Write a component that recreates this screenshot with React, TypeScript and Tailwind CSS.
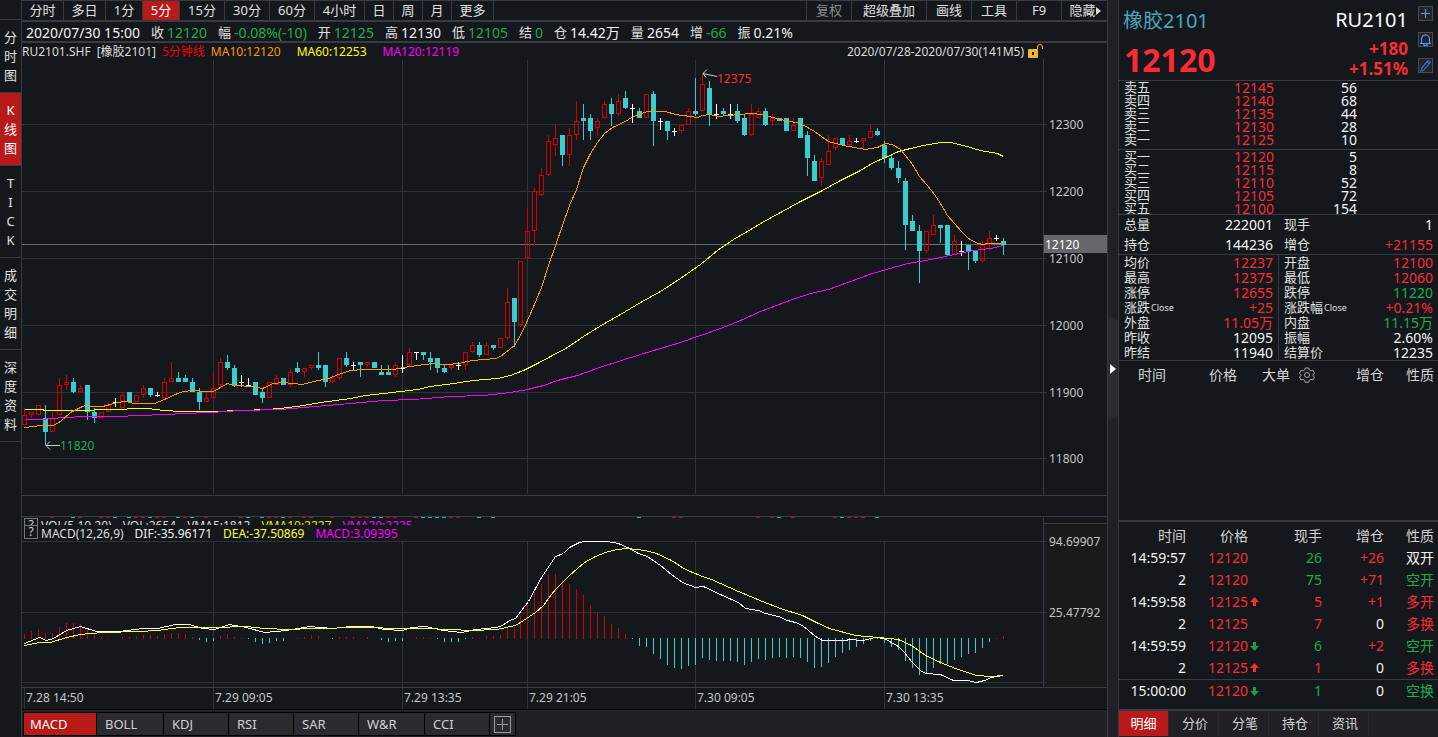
import clsx from 'clsx'
import type { ReactNode } from 'react'

type Kind = 'U' | 'D' | 'W'
// kind, body top, body bottom, high, low - in 5-point steps above 11800
type Candle = [Kind, number, number, number, number]
type Quote = { label: string; value: string; tone?: string; sup?: string }
type Trade = {
  time: string
  price: string
  dir?: 'up' | 'down'
  hand: string
  diff: string
  kind: string
  handTone: string
  kindTone: string
}

const RED = 'text-[#fb2b33]'
const GREEN = 'text-[#1fae4c]'
const WHITE = 'text-[#f2f2f2]'

const periods = [
  { name: '分时', width: 'w-[42px]' },
  { name: '多日', width: 'w-[42px]' },
  { name: '1分', width: 'w-[37px]' },
  { name: '5分', width: 'w-[37px]' },
  { name: '15分', width: 'w-[45px]' },
  { name: '30分', width: 'w-[45px]' },
  { name: '60分', width: 'w-[45px]' },
  { name: '4小时', width: 'w-[50px]' },
  { name: '日', width: 'w-[29px]' },
  { name: '周', width: 'w-[29px]' },
  { name: '月', width: 'w-[29px]' },
  { name: '更多', width: 'w-[42px]' },
]

const tools = [
  { name: '复权', width: 'w-[45px]' },
  { name: '超级叠加', width: 'w-[75px]' },
  { name: '画线', width: 'w-[45px]' },
  { name: '工具', width: 'w-[45px]' },
  { name: 'F9', width: 'w-[45px]' },
]

const views = ['分时图', 'K线图', 'TICK', '成交明细', '深度资料']

const summary: Quote[] = [
  { label: '收', value: '12120', tone: GREEN },
  { label: '幅', value: '-0.08%(-10)', tone: GREEN },
  { label: '开', value: '12125', tone: GREEN },
  { label: '高', value: '12130' },
  { label: '低', value: '12105', tone: GREEN },
  { label: '结', value: '0', tone: GREEN },
  { label: '仓', value: '14.42万' },
  { label: '量', value: '2654' },
  { label: '增', value: '-66', tone: GREEN },
  { label: '振', value: '0.21%' },
]

const indicators = [
  { name: 'MACD', width: 'w-[72px]' },
  { name: 'BOLL', width: 'w-[66px]' },
  { name: 'KDJ', width: 'w-16' },
  { name: 'RSI', width: 'w-16' },
  { name: 'SAR', width: 'w-16' },
  { name: 'W&R', width: 'w-[65px]' },
  { name: 'CCI', width: 'w-16' },
]

const asks = [
  ['卖五', '12145', '56'],
  ['卖四', '12140', '68'],
  ['卖三', '12135', '44'],
  ['卖二', '12130', '28'],
  ['卖一', '12125', '10'],
]

const bids = [
  ['买一', '12120', '5'],
  ['买二', '12115', '8'],
  ['买三', '12110', '52'],
  ['买四', '12105', '72'],
  ['买五', '12100', '154'],
]

const totals: Quote[] = [
  { label: '总量', value: '222001' },
  { label: '现手', value: '1' },
  { label: '持仓', value: '144236' },
  { label: '增仓', value: '+21155', tone: RED },
]

const stats: Quote[] = [
  { label: '均价', value: '12237', tone: RED },
  { label: '开盘', value: '12100', tone: RED },
  { label: '最高', value: '12375', tone: RED },
  { label: '最低', value: '12060', tone: RED },
  { label: '涨停', value: '12655', tone: RED },
  { label: '跌停', value: '11220', tone: GREEN },
  { label: '涨跌', value: '+25', tone: RED, sup: 'Close' },
  { label: '涨跌幅', value: '+0.21%', tone: RED, sup: 'Close' },
  { label: '外盘', value: '11.05万', tone: RED },
  { label: '内盘', value: '11.15万', tone: GREEN },
  { label: '昨收', value: '12095' },
  { label: '振幅', value: '2.60%' },
  { label: '昨结', value: '11940' },
  { label: '结算价', value: '12235' },
]

const trades: Trade[] = [
  { time: '14:59:57', price: '12120', hand: '26', diff: '+26', kind: '双开', handTone: GREEN, kindTone: WHITE },
  { time: '2', price: '12120', hand: '75', diff: '+71', kind: '空开', handTone: GREEN, kindTone: GREEN },
  { time: '14:59:58', price: '12125', dir: 'up', hand: '5', diff: '+1', kind: '多开', handTone: RED, kindTone: RED },
  { time: '2', price: '12125', hand: '7', diff: '0', kind: '多换', handTone: RED, kindTone: RED },
  { time: '14:59:59', price: '12120', dir: 'down', hand: '6', diff: '+2', kind: '空开', handTone: GREEN, kindTone: GREEN },
  { time: '2', price: '12125', dir: 'up', hand: '1', diff: '0', kind: '多换', handTone: RED, kindTone: RED },
  { time: '15:00:00', price: '12120', dir: 'down', hand: '1', diff: '0', kind: '空换', handTone: GREEN, kindTone: GREEN },
]

const detailTabs = ['明细', '分价', '分笔', '持仓', '资讯']

const candles: Candle[] = [
  ['U', 13, 10, 15, 10], ['U', 14, 13, 14, 12], ['U', 16, 13, 16, 13], ['D', 12, 8, 16, 4],
  ['U', 12, 8, 14, 8], ['U', 22, 13, 24, 13], ['U', 23, 22, 25, 20.5], ['D', 23, 20, 24, 19.5],
  ['U', 21, 20, 22, 20], ['D', 22, 14, 22, 11.5], ['D', 14, 12, 15, 10.5], ['U', 14, 12, 14, 12],
  ['U', 16, 14, 17, 14], ['W', 17, 17, 18, 15.5], ['U', 19, 15, 20, 15], ['D', 20, 17, 20, 16.5],
  ['U', 19, 17, 19, 17], ['U', 21, 19, 22, 18], ['D', 21, 19, 21, 18.5], ['W', 19, 19, 20, 18.5],
  ['U', 23, 18, 24, 18], ['U', 24, 23, 29, 23], ['D', 24, 23, 26, 23], ['D', 24, 23, 25, 23],
  ['D', 23, 20, 24, 20], ['D', 20, 17, 21, 14.5], ['U', 18, 17, 20, 17], ['U', 21, 18, 26, 18],
  ['U', 29, 22, 30, 21], ['D', 29, 27, 31, 26.5], ['D', 27, 22, 28, 21.5], ['W', 23, 23, 25, 21.5],
  ['W', 22, 22, 24, 21.5], ['D', 23, 19, 23, 19], ['D', 20, 18, 21, 16.5], ['U', 23, 18, 23, 18],
  ['U', 24, 22, 25, 22], ['D', 24, 22, 24, 22], ['U', 26, 22, 27, 21.5], ['D', 27, 26, 29, 25.5],
  ['U', 27, 26, 27, 24.5], ['U', 28, 27, 28, 26.5], ['D', 28, 27, 32, 26.5], ['D', 28, 23, 28, 21.5],
  ['U', 24, 23, 25, 22.5], ['U', 30, 24, 30, 23.5], ['D', 30, 28, 32, 27.5], ['W', 28, 28, 29, 26.5],
  ['D', 29, 28, 29, 24.5], ['U', 29, 28, 29, 27.5], ['D', 29, 27, 29, 27], ['D', 26, 25, 28, 25],
  ['D', 26, 25, 28, 25], ['U', 28, 25, 29, 24.5], ['W', 27, 27, 31, 25.5], ['U', 32, 28, 33, 27.5],
  ['W', 32, 32, 32, 29.5], ['D', 32, 31, 32, 29.5], ['D', 30, 29, 32, 26.5], ['D', 30, 27, 30, 25.5],
  ['D', 27, 26, 28, 25.5], ['U', 28, 27, 28, 26.5], ['W', 28, 28, 29, 26.5], ['U', 32, 28, 32, 26.5],
  ['U', 34, 32, 35, 31.5], ['D', 34, 31, 35, 30.5], ['U', 34, 31, 35, 31], ['D', 34, 33, 34, 32.5],
  ['U', 36, 33, 36, 33], ['U', 47, 36, 51, 35.5], ['D', 48, 41, 48, 33.5], ['U', 59, 40, 59, 39.5],
  ['U', 68, 60, 75, 60], ['U', 80, 68, 81, 63.5], ['U', 85, 79, 87, 78.5], ['U', 95, 85, 97, 84.5],
  ['U', 96, 94, 100, 90.5], ['D', 97, 91, 97, 87.5], ['U', 97, 91, 99, 87.5], ['U', 101, 97, 107, 95.5],
  ['D', 102, 101, 106, 95.5], ['D', 102, 98, 103, 95.5], ['U', 101, 99, 102, 96.5], ['U', 106, 102, 107, 101.5],
  ['D', 106, 103, 108, 99.5], ['U', 107, 103, 109, 102.5], ['D', 108, 105, 110, 104.5], ['W', 105, 105, 106, 100.5],
  ['D', 104, 102, 105, 102], ['U', 109, 102, 109, 102], ['D', 109, 101, 110, 93.5], ['W', 101, 101, 102, 98.5],
  ['D', 101, 98, 101, 95.5], ['W', 98, 98, 99, 96.5], ['U', 100, 98, 100, 97.5], ['U', 104, 100, 105, 100],
  ['D', 104, 103, 114, 102.5], ['U', 112, 104, 115, 104], ['D', 111, 103, 113, 99.5], ['W', 103, 103, 106, 101.5],
  ['D', 104, 103, 105, 102.5], ['W', 103, 103, 106, 101.5], ['D', 104, 101, 106, 100.5], ['D', 102, 97, 103, 96.5],
  ['U', 103, 97, 106, 96.5], ['U', 104, 102, 105, 102], ['D', 104, 100, 105, 99.5], ['U', 102, 101, 103, 99.5],
  ['D', 102, 101, 102, 101], ['D', 102, 98, 102, 98], ['U', 100, 98, 102, 98], ['D', 102, 96, 102, 96],
  ['D', 97, 90, 98, 84.5], ['D', 89, 83, 91, 83], ['U', 89, 84, 90, 81.5], ['U', 92, 88, 97, 88],
  ['U', 96, 93, 96, 92.5], ['D', 96, 94, 96, 93.5], ['U', 95, 94, 97, 93.5], ['W', 95, 95, 96, 94.5],
  ['U', 96, 95, 96, 92.5], ['U', 98, 96, 100, 96], ['D', 98, 97, 99, 96.5], ['D', 94, 90, 95, 88.5],
  ['D', 90, 87, 91, 86.5], ['D', 87, 84, 89, 82.5], ['D', 83, 70, 84, 62.5], ['D', 71, 68, 73, 68],
  ['D', 68, 62, 70, 52.5], ['U', 68, 62, 68, 61.5], ['U', 70, 67, 73, 67], ['D', 70, 69, 70, 64.5],
  ['D', 70, 61, 70, 61], ['U', 65, 61, 67, 61], ['W', 62, 62, 65, 60.5], ['D', 64, 62, 64, 56.5],
  ['D', 62, 59, 62, 58.5], ['U', 64, 59, 65, 58.5], ['U', 66, 64, 68, 62.5], ['W', 66, 66, 67, 65],
  ['D', 65, 64, 66, 61],
]

const macdBars = [
  5, 8, 10, 6, 6, 12, 16, 16, 15, 11, 4, 2, 1, 0, 2, 2, 3, 4, 4, 3, 5, 6, 6, 5, 2, -2, -4, -3, 3, 5,
  2, 1, -1, -4, -6, -5, -3, -3, 0, 1, 2, 4, 3, 0, -1, 2, 2, 2, 1, 2, 0, -2, -4, -3, -3, 0, 2, 2, 1, -1,
  -4, -4, -4, -1, 2, 1, 3, 3, 4, 12, 12, 23, 34, 47, 55, 64, 65, 59, 55, 50, 44, 34, 27, 23, 15, 11, 5,
  -1, -8, -9, -16, -21, -27, -30, -31, -28, -27, -20, -22, -23, -23, -23, -24, -27, -24, -21, -22, -20,
  -19, -20, -19, -20, -24, -30, -29, -25, -19, -15, -12, -9, -6, -3, -1, -5, -9, -12, -23, -30, -37,
  -35, -30, -26, -26, -22, -19, -16, -15, -10, -4, 1, 3,
]

const volUp = [4, 8, 11, 12, 16, 17, 19, 20, 23, 26, 31, 35, 36, 38, 40, 41, 44, 47, 48, 49, 52, 53, 56, 61, 62, 93, 94, 105, 107, 110, 116, 118, 119, 120]
const volDown = [7, 13, 15, 18, 22, 24, 32, 34, 37, 50, 51, 57, 58, 59, 60, 65, 67, 88, 108, 117, 122]

const ma10 =
  '24,427 33,426 40,425 53,425 60,421 70,412 82,406 87,404 90,406 102,406 110,404 117,402 125,401 134,403 154,403 164,399 177,393 183,391 193,390 203,391 213,391 220,387 227,383 233,385 253,386 262,388 273,383 283,382 302,384 313,381 328,378 338,374 350,370 363,369 377,369 393,369 403,367 417,365 432,363 447,364 458,363 472,360 495,358 500,356 514,345 521,333 527,320 534,304 541,287 548,265 555,245 569,205 576,189 583,167 590,153 597,142 604,133 612,127 623,122 633,116 647,111 665,111 675,114 697,117 702,115 710,114 717,116 750,113 763,114 772,117 785,120 800,123 814,131 828,141 843,145 865,149 877,147 885,143 892,144 900,149 905,155 912,164 919,176 927,185 934,194 940,203 947,215 954,223 961,231 968,238 975,242 982,244 988,243 997,243 1003,244'
const ma60 =
  '24,409 42,409 44,410 63,410 125,409 128,408 147,408 163,410 182,411 210,411 243,410 265,409 280,408 303,405 320,402 350,398 365,395 383,393 400,391 417,389 430,386 453,383 473,380 497,378 510,375 523,370 537,363 550,356 567,347 583,336 599,326 620,314 640,302 660,291 680,278 700,264 717,250 733,239 747,231 760,223 780,212 800,201 820,191 840,180 860,170 873,162 885,157 898,151 910,148 923,145 940,142 950,142 963,145 980,150 997,153 1003,156'
const ma120 =
  '24,419 40,419 63,417 87,416 118,416 137,415 167,414 182,413 210,412 240,410 280,409 303,407 350,403 383,400 413,399 450,396 483,395 510,392 527,389 543,385 557,380 577,375 599,367 640,354 680,342 720,328 740,320 760,311 792,299 810,293 828,289 850,281 872,273 893,267 907,263 920,261 940,257 963,252 973,250 990,248 1003,245'
const dif =
  '24,643 39,637 46,640 53,638 66,630 80,626 96,631 118,631 143,628 157,628 175,624 189,624 202,628 214,629 229,624 246,627 264,632 286,630 309,626 332,628 350,626 371,626 384,629 402,630 411,627 425,626 443,630 461,632 475,629 496,627 502,625 509,620 515,618 521,610 528,601 535,588 541,577 549,565 555,556 563,553 569,547 579,542 584,541 607,541 618,543 629,548 638,553 647,556 660,565 671,574 682,582 695,587 703,586 722,595 738,602 745,608 758,610 765,613 778,616 787,620 795,622 802,625 808,630 815,636 822,640 845,640 849,639 862,640 875,637 884,638 889,641 898,646 904,652 911,661 920,670 925,673 940,674 953,680 967,680 976,682 984,680 991,677 1003,675'
const dea =
  '24,645 39,642 50,642 66,637 80,634 89,633 104,632 139,631 157,630 179,627 214,627 246,626 264,628 289,629 311,628 364,627 400,628 425,628 450,629 471,630 496,629 515,625 523,620 535,612 543,605 548,598 555,589 569,575 584,562 595,556 605,552 616,549 627,548 645,550 656,553 671,560 685,569 702,576 711,579 738,591 762,601 780,608 802,615 816,622 829,628 855,635 878,637 898,639 911,645 925,655 940,662 955,668 976,675 991,676 1003,675'

const priceLines = [
  { y: 124, label: '12300' },
  { y: 191, label: '12200' },
  { y: 258, label: '12100' },
  { y: 325, label: '12000' },
  { y: 392, label: '11900' },
  { y: 458, label: '11800' },
]

const sessions = [
  { x: 24, label: '7.28 14:50' },
  { x: 213, label: '7.29 09:05' },
  { x: 402, label: '7.29 13:35' },
  { x: 527, label: '7.29 21:05' },
  { x: 695, label: '7.30 09:05' },
  { x: 884, label: '7.30 13:35' },
]

const barX = (i: number) => (i > 70 ? 23 : 24) + i * 7
const levelY = (level: number) => Math.round(458.5 - level * 3.34)

const CandleShape = ({ candle, x }: { candle: Candle; x: number }) => {
  const [kind, top, bottom, high, low] = candle
  const t = levelY(top)
  const b = levelY(bottom)
  const h = levelY(high)
  const l = levelY(low)

  if (kind === 'W') {
    return (
      <g fill="#fff">
        <rect x={x} y={h} width={1} height={l - h} />
        <rect x={x - 2} y={t} width={5} height={1} />
      </g>
    )
  }

  if (kind === 'D') {
    return (
      <g fill="#38cdce">
        <rect x={x} y={h} width={1} height={l - h} />
        <rect x={x - 2} y={t} width={5} height={b - t} />
      </g>
    )
  }

  return (
    <g fill="#d40000">
      <rect x={x} y={h} width={1} height={t - h} />
      <rect x={x} y={b} width={1} height={Math.max(l - b, 0)} />
      <path d={`M${x - 2} ${t}h5v${b - t}h-5zM${x - 1} ${t + 1}v${b - t - 2}h3v${2 - b + t}z`} />
    </g>
  )
}

const PriceChart = () => (
  <svg
    className="block w-full h-[459px]"
    viewBox="22 59 1085 459"
    preserveAspectRatio="xMinYMin meet"
    shapeRendering="crispEdges"
  >
    <g fill="#303337">
      {sessions.slice(1).map((s) => (
        <rect key={s.x} x={s.x} y={60} width={1} height={434} />
      ))}
      {priceLines.map((p) => (
        <rect key={p.y} x={22} y={p.y} width={1025} height={1} />
      ))}
    </g>
    <g fill="#3a3c42">
      <rect x={22} y={495} width={1085} height={1} />
      <rect x={22} y={516} width={1085} height={1} />
      <rect x={1043} y={59} width={1} height={436} />
    </g>
    <rect x={22} y={244} width={1021} height={1} fill="#6a6b6d" />

    {candles.map((c, i) => (
      <CandleShape key={i} candle={c} x={barX(i)} />
    ))}

    <g fill="none" strokeWidth={1}>
      <polyline points={ma60} stroke="#ffff00" transform="translate(.5 .5)" />
      <polyline points={ma120} stroke="#ff00ff" transform="translate(.5 .5)" />
      <polyline points={ma10} stroke="#ff9900" transform="translate(.5 .5)" />
    </g>

    {volUp.map((i) => (
      <rect key={i} x={barX(i) - 2} y={517} width={4} height={1} fill="#b01414" />
    ))}
    {volDown.map((i) => (
      <rect key={i} x={barX(i) - 2} y={517} width={4} height={1} fill="#2fb0b1" />
    ))}

    <g fill="none" stroke="#d0d0d0" shapeRendering="auto">
      <path d="M60 445.500H46M50 441.500l-4 4 4 4" />
      <path d="M717 76.500l-14-3M707 69.500l-4 4 3 4" />
    </g>
    <g fontSize={12}>
      <text x={717} y={83} fill="#fb2b33">12375</text>
      <text x={60} y={450} fill="#1fae4c">11820</text>
      {priceLines.map((p) => (
        <text key={p.y} x={1049} y={p.y + 5} fill="#c4c6c8">{p.label}</text>
      ))}
      <rect x={1044} y={235} width={63} height={18} fill="#66676a" />
      <text x={1045} y={249} fill="#fff">12120</text>
    </g>
  </svg>
)

const MacdChart = () => (
  <svg
    className="block w-full h-[168px] overflow-visible"
    viewBox="22 541 1085 168"
    preserveAspectRatio="xMinYMin meet"
    shapeRendering="crispEdges"
  >
    <rect x={1044} y={541} width={63} height={146} fill="#1a1a1b" />
    <g fill="#303337">
      {sessions.slice(1).map((s) => (
        <rect key={s.x} x={s.x} y={541} width={1} height={168} />
      ))}
      <rect x={24} y={688} width={1} height={21} />
      <rect x={22} y={541} width={1025} height={1} />
      <rect x={22} y={612} width={1025} height={1} />
      <rect x={22} y={682} width={1025} height={1} />
    </g>
    <g fill="#3a3c42">
      <rect x={22} y={687} width={1085} height={1} />
      <rect x={1043} y={541} width={1} height={146} />
    </g>

    {macdBars.map((v, i) => (
      <rect
        key={i}
        x={barX(i)}
        y={v > 0 ? 639 - v : 638}
        width={1}
        height={Math.abs(v)}
        fill={v > 0 ? '#d40000' : '#38cdce'}
      />
    ))}

    <g fill="none" strokeWidth={1}>
      <polyline points={dif} stroke="#ffffff" transform="translate(.5 .5)" />
      <polyline points={dea} stroke="#ffff33" transform="translate(.5 .5)" />
    </g>

    <g fontSize={12} fill="#c4c6c8">
      <text x={1049} y={546}>94.69907</text>
      <text x={1049} y={617}>25.47792</text>
      {sessions.map((s) => (
        <text key={s.x} x={s.x + 2} y={702}>{s.label}</text>
      ))}
    </g>
  </svg>
)

const HelpButton = () => (
  <button className="w-[14px] h-[14px] shrink-0 border border-[#77787b] text-[12px] leading-[12px] text-[#d0d0d0]">
    ?
  </button>
)

const ViewTabs = () => (
  <nav className="w-[22px] shrink-0 border-r border-[#3a3a42] pt-[19px]">
    {views.map((view) => (
      <button
        key={view}
        className={clsx(
          'flex w-full flex-col items-center border-t border-[#3a3a42] pt-2 pb-[7px] text-[13px] leading-[19px]',
          view === 'K线图' ? 'bg-[#b81919] text-white' : 'text-[#e0e0e0]',
        )}
      >
        {view.split('').map((char, i) => (
          <span key={i}>{char}</span>
        ))}
      </button>
    ))}
    <div className="border-t border-[#3a3a42]" />
  </nav>
)

const TopBar = () => (
  <div className="flex h-[22px] border-t border-b-2 border-[#3a3a42] text-[13px] leading-[19px] text-[#e0e0e0]">
    {periods.map((p) => (
      <button
        key={p.name}
        className={clsx('shrink-0 border-r border-[#3a3a42]', p.width, p.name === '5分' && 'bg-[#b81919] text-white')}
      >
        {p.name}
      </button>
    ))}
    <div className="ml-auto flex">
      {tools.map((t) => (
        <button
          key={t.name}
          className={clsx('shrink-0 border-l border-[#3a3a42]', t.width, t.name === '复权' && 'text-[#8a8b8d]')}
        >
          {t.name}
        </button>
      ))}
      <button className="flex w-[46px] items-center justify-center border-l border-[#3a3a42] pl-px">
        隐藏
        <svg className="h-2 w-[5px]" viewBox="0 0 5 8">
          <path d="M0 0l5 4-5 4z" fill="#d8d8d8" />
        </svg>
      </button>
    </div>
  </div>
)

const SummaryBar = () => (
  <div className="flex h-[21px] items-center gap-[11px] border-b-2 border-[#3a3a42] pt-[2px] pl-1 text-[14px] leading-[19px] text-[#f2f2f2] whitespace-nowrap">
    <span>2020/07/30 15:00</span>
    {summary.map((s) => (
      <span key={s.label} className="flex gap-[3px]">
        <span className="text-[13px] text-[#e0e0e0]">{s.label}</span>
        <span className={s.tone}>{s.value}</span>
      </span>
    ))}
  </div>
)

const MaLegend = () => (
  <div className="flex h-4 items-center pt-[2px] text-[12px] leading-4 whitespace-nowrap text-[#dcdcdc]">
    <span>RU2101.SHF</span>
    <span className="ml-[6px]">[橡胶2101]</span>
    <span className="ml-[6px] text-[#f00000]">5分钟线</span>
    <span className="ml-[6px] text-[#ff9900]">MA10:12120</span>
    <span className="ml-4 text-[#ffff00]">MA60:12253</span>
    <span className="ml-4 text-[#ff00ff]">MA120:12119</span>
    <span className="ml-auto">2020/07/28-2020/07/30(141M5)</span>
    <svg className="ml-1 mr-16 h-4 w-[15px]" viewBox="0 0 15 16">
      <rect x="0" y="5" width="10" height="9" rx="1" fill="#efb436" />
      <path d="M5 8v3" stroke="#14171b" strokeWidth="2" />
      <path d="M9.500 5V3a2.500 2.500 0 0 1 5 0v2" fill="none" stroke="#efb436" />
    </svg>
  </div>
)

const IndicatorLegends = () => (
  <div className="flex h-[23px]">
    <div className="min-w-0 flex-1 text-[12px] leading-[14px] whitespace-nowrap">
      <div className="h-[7px] overflow-hidden">
        <div className="flex gap-[11px] pl-[2px] text-[#dcdcdc]">
          <HelpButton />
          <span className="-ml-2 leading-4">VOL(5,10,20)</span>
          <span className="leading-4">VOL:2654</span>
          <span className="leading-4">VMA5:1812</span>
          <span className="leading-4 text-[#e6e600]">VMA10:2227</span>
          <span className="leading-4 text-[#ff00ff]">VMA20:2235</span>
        </div>
      </div>
      <div className="flex h-4 gap-[11px] pl-[2px] text-[#f2f2f2]">
        <HelpButton />
        <span className="-ml-2 leading-[18px] text-[#dcdcdc]">MACD(12,26,9)</span>
        <span className="leading-[18px]">DIF:-35.96171</span>
        <span className="leading-[18px] text-[#ffff33]">DEA:-37.50869</span>
        <span className="leading-[18px] text-[#ff00ff]">MACD:3.09395</span>
      </div>
    </div>
    <div className="flex w-16 shrink-0 flex-col border-l border-[#3a3c42] pt-[5px]">
      <div className="flex-1 border-t border-[#3a3c42] bg-[#1a1a1b]" />
    </div>
  </div>
)

const IndicatorTabs = () => (
  <div className="flex flex-1 items-start gap-px border-t border-black bg-[#212026] pt-[3px] pl-[2px] text-[13px] leading-[22px]">
    {indicators.map((t) => (
      <button
        key={t.name}
        className={clsx(
          'h-[22px] shrink-0 text-left outline outline-black',
          t.width,
          t.name === 'MACD' ? 'bg-[#b81919] pl-[6px] text-white' : 'bg-[#2b2a30] pl-2 text-[#d0d0d0]',
        )}
      >
        {t.name}
      </button>
    ))}
    <button
      className="flex h-[22px] w-[25px] items-center justify-center bg-[#2b2a30] outline outline-black"
      aria-label="添加指标"
    >
      <svg className="h-[17px] w-[17px]" viewBox="0 0 17 17" fill="none" stroke="#9a9a9c" shapeRendering="crispEdges">
        <path d="M.5 .5h16v16H.5zM8.500 3v11M3 8.500h11" />
      </svg>
    </button>
  </div>
)

const IconButton = ({ label, children }: { label: string; children: ReactNode }) => (
  <button
    aria-label={label}
    className="flex h-[15px] w-[15px] items-center justify-center border border-[#4b4b4d] bg-[#242427]"
  >
    <svg className="h-[13px] w-[13px] shrink-0" viewBox="0 0 13 13" fill="none" stroke="#4b9bff" strokeWidth="1.2">
      {children}
    </svg>
  </button>
)

const ContractHeader = () => (
  <header className="flex h-[81px] border-b border-[#3a3a42] pt-[6px] pl-1">
    <div className="flex-1 pt-[2px]">
      <div className="text-[20px] leading-[26px] text-[#4ba6bd]">橡胶2101</div>
      <div className="pl-px text-[32px] leading-[52px] font-bold text-[#fb2b33]">12120</div>
    </div>
    <div className="mr-[10px] text-right">
      <div className="text-[20px] leading-[28px] text-white">RU2101</div>
      <div className="pt-[5px] text-[17px] leading-5 font-bold text-[#fb2b33]">
        <div>+180</div>
        <div>+1.51%</div>
      </div>
    </div>
    <div className="mr-[5px] flex flex-col gap-[11px]">
      <IconButton label="添加">
        <path d="M6.500 2v9M2 6.500h9" />
      </IconButton>
      <IconButton label="预警">
        <path d="M1 10.500h11M2.500 10.500V6a4 4 0 0 1 8 0v4.500M5 11v1.500h3V11M6.500 2V1" />
      </IconButton>
      <IconButton label="画笔">
        <path d="M2 12l.7-3L9 1.500l2.300 1.800L5 11zM8 3l2 1.700" stroke="#3668d8" />
      </IconButton>
    </div>
  </header>
)

const DepthTable = ({ rows }: { rows: string[][] }) => (
  <table className="w-full table-fixed text-[14px] leading-[13px]">
    <tbody>
      {rows.map(([label, price, volume]) => (
        <tr key={label} className="h-[13px]">
          <th className="w-[65px] p-0 pl-[5px] text-left text-[13px] font-normal text-[#e0e0e0]">{label}</th>
          <td className="w-[90px] p-0 text-right text-[#fb2b33]">{price}</td>
          <td className="w-[83px] p-0 text-right text-[#f2f2f2]">{volume}</td>
          <td className="p-0" />
        </tr>
      ))}
    </tbody>
  </table>
)

const QuoteGrid = ({ items, className, divided }: { items: Quote[]; className: string; divided?: boolean }) => (
  <dl className={clsx('grid grid-cols-[159px_1fr] border-b border-[#3a3a42]', className)}>
    {items.map((q, i) => (
      <div
        key={q.label}
        className={clsx(
          'flex items-center justify-between pl-[5px] pr-[5px]',
          divided && i % 2 === 1 && 'border-l border-[#3a3a42]',
          !divided && i % 2 === 1 && 'pl-[6px]',
        )}
      >
        <dt className="flex text-[13px] text-[#e0e0e0]">
          {q.label}
          {q.sup && <span className="pl-px text-[9px]">{q.sup}</span>}
        </dt>
        <dd className={clsx('text-[14px]', q.tone ?? WHITE)}>{q.value}</dd>
      </div>
    ))}
  </dl>
)

const BigOrders = () => (
  <section className="h-[161px] border-b-2 border-[#3a3a42] pt-[3px]">
    <table className="w-full table-fixed text-[14px] leading-[22px] text-[#d4d4d4]">
      <thead>
        <tr className="text-right">
          <th className="w-[47px] p-0 font-normal">时间</th>
          <th className="w-[71px] p-0 font-normal">价格</th>
          <th className="w-[78px] p-0 font-normal">
            <span className="flex items-center justify-end gap-[9px]">
              大单
              <svg className="h-4 w-4" viewBox="0 0 16 16" fill="none" stroke="#a8a8aa">
                <path d="M6.300 1h3.400l.6 2 1.500.9 2.100-.6 1.600 2.900-1.500 1.600v.8l1.500 1.500-1.600 2.900-2.100-.6-1.500.9-.6 2H6.300l-.6-2-1.500-.9-2.100.6L.5 10.100 2 8.600v-.8L.5 6.200l1.600-2.900 2.100.6 1.500-.9z" />
                <circle cx="8" cy="8" r="2.500" />
              </svg>
            </span>
          </th>
          <th className="w-[69px] p-0 font-normal">增仓</th>
          <th className="p-0 pr-1 font-normal">性质</th>
        </tr>
      </thead>
    </table>
  </section>
)

const DirArrow = ({ dir }: { dir: 'up' | 'down' }) => (
  <svg className="h-[10px] w-[9px]" viewBox="0 0 9 10">
    {dir === 'up' ? (
      <path d="M4.500 0L9 5H6v4H3V5H0z" fill="#fb2b33" />
    ) : (
      <path d="M4.500 10L9 5H6V1H3v4H0z" fill="#1f9a46" />
    )}
  </svg>
)

const TradeTable = () => (
  <section className="h-[189px] border-b-2 border-[#3a3a42] pt-[3px]">
    <table className="w-full table-fixed border-collapse text-right text-[14px] leading-[22px] text-[#f2f2f2]">
      <thead>
        <tr className="h-[22px] text-[#d4d4d4]">
          <th className="w-[67px] p-0 font-normal">时间</th>
          <th className="w-[75px] p-0 pr-[13px] font-normal">价格</th>
          <th className="w-[61px] p-0 font-normal">现手</th>
          <th className="w-[62px] p-0 font-normal">增仓</th>
          <th className="p-0 pr-1 font-normal">性质</th>
        </tr>
      </thead>
      <tbody>
        {trades.map((t) => (
          <tr key={t.time + t.hand} className="h-[22px] last:border-t last:border-[#3a3a42]">
            <td className="p-0">{t.time}</td>
            <td className="p-0 pl-[22px] text-[#fb2b33]">
              <span className="flex items-center gap-[2px]">
                {t.price}
                {t.dir && <DirArrow dir={t.dir} />}
              </span>
            </td>
            <td className={clsx('p-0', t.handTone)}>{t.hand}</td>
            <td className={clsx('p-0', t.diff === '0' ? WHITE : RED)}>{t.diff}</td>
            <td className={clsx('p-0 pr-1', t.kindTone)}>{t.kind}</td>
          </tr>
        ))}
      </tbody>
    </table>
  </section>
)

const QuotePanel = () => (
  <aside className="flex w-[320px] shrink-0 flex-col border-l border-[#3a3a42]">
    <ContractHeader />
    <div className="h-[69px] border-b border-[#3a3a42]">
      <DepthTable rows={asks} />
    </div>
    <div className="h-[65px] overflow-hidden border-b border-[#3a3a42]">
      <DepthTable rows={bids} />
    </div>
    <QuoteGrid items={totals} className="h-10 leading-[19px]" />
    <QuoteGrid items={stats} className="auto-rows-[15px] leading-[15px]" divided />
    <BigOrders />
    <TradeTable />
    <div className="flex flex-1 items-start bg-[#212026]">
      {detailTabs.map((tab) => (
        <button
          key={tab}
          className={clsx(
            'h-[25px] w-[50px] border-r border-[#2b2a30] text-[13px]',
            tab === '明细' ? 'bg-[#b81919] text-white' : 'pl-[3px] text-[#d4d4d4]',
          )}
        >
          {tab}
        </button>
      ))}
    </div>
  </aside>
)

export default function App() {
  return (
    <div className="flex min-h-screen bg-[#14171b] font-['Noto_Sans','Noto_Sans_CJK_SC',sans-serif]">
      <ViewTabs />
      <main className="flex min-w-0 flex-1 flex-col border-r border-[#3a3a42]">
        <TopBar />
        <SummaryBar />
        <MaLegend />
        <PriceChart />
        <IndicatorLegends />
        <MacdChart />
        <IndicatorTabs />
      </main>
      <div className="flex w-[10px] shrink-0 items-center bg-[#212026]">
        <button
          aria-label="收起"
          className="flex h-[106px] w-full items-center justify-center bg-[#2b2a30] [clip-path:polygon(0_0,100%_5%,100%_95%,0_100%)]"
        >
          <svg className="h-[10px] w-[6px]" viewBox="0 0 6 10">
            <path d="M0 0l6 5-6 5z" fill="#fff" />
          </svg>
        </button>
      </div>
      <QuotePanel />
    </div>
  )
}
